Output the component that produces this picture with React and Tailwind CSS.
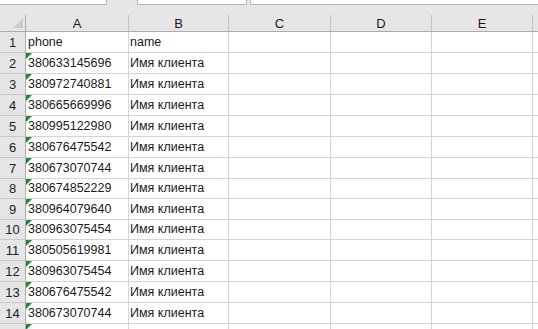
import React from "react";

// sheet columns (width includes the right gridline)
const COLS = [
  { key: "A", w: "w-[103px]" },
  { key: "B", w: "w-[100px]" },
  { key: "C", w: "w-[102px]" },
  { key: "D", w: "w-[101px]" },
  { key: "E", w: "w-[101px]" },
];

const ROWS = [
  { a: "phone", b: "name", h: "h-[21px]", flag: false },
  { a: "380633145696", b: "Имя клиента", h: "h-[21px]", flag: true },
  { a: "380972740881", b: "Имя клиента", h: "h-[21px]", flag: true },
  { a: "380665669996", b: "Имя клиента", h: "h-[21px]", flag: true },
  { a: "380995122980", b: "Имя клиента", h: "h-[21px]", flag: true },
  { a: "380676475542", b: "Имя клиента", h: "h-[21px]", flag: true },
  { a: "380673070744", b: "Имя клиента", h: "h-[21px]", flag: true },
  { a: "380674852229", b: "Имя клиента", h: "h-[20px]", flag: true },
  { a: "380964079640", b: "Имя клиента", h: "h-[21px]", flag: true },
  { a: "380963075454", b: "Имя клиента", h: "h-[20px]", flag: true },
  { a: "380505619981", b: "Имя клиента", h: "h-[21px]", flag: true },
  { a: "380963075454", b: "Имя клиента", h: "h-[21px]", flag: true },
  { a: "380676475542", b: "Имя клиента", h: "h-[21px]", flag: true },
  { a: "380673070744", b: "Имя клиента", h: "h-[21px]", flag: true },
  // only the top sliver of row 15 is on screen
  { a: "", b: "", h: "h-[21px]", flag: true, hidden: true },
];

function Flag() {
  return (
    <svg className="absolute left-0 top-0" width="6" height="6" viewBox="0 0 6 6">
      <polygon points="0,0 6,0 0,6" fill="#1f8a33" />
    </svg>
  );
}

export default function App() {
  return (
    <div
      className="w-[538px] h-[329px] overflow-hidden bg-[#e6e6e6] text-[#1a1a1a]"
      style={{ fontFamily: '"Liberation Sans", Arial, sans-serif' }}
    >
      {/* formula bar remains */}
      <div className="flex h-[15px]">
        <div className="w-[107px] h-[5px] bg-white border-r border-b border-[#b9b9b9]" />
        <div className="ml-[30px] w-[110px] h-[5px] bg-white border-x border-b border-[#b9b9b9]" />
        <div className="ml-[3px] flex-1 h-[5px] bg-white border-l border-b border-[#b9b9b9]" />
      </div>

      {/* column headers */}
      <div className="flex h-[17px] border-b border-[#ababab]">
        <div className="relative w-[26px] shrink-0 border-r border-[#ababab]">
          <svg className="absolute left-[13px] top-[3px]" width="10" height="10" viewBox="0 0 10 10">
            <polygon points="10,0 10,10 0,10" fill="#cbcbcb" />
          </svg>
        </div>
        {COLS.map((c) => (
          <div
            key={c.key}
            className={`${c.w} shrink-0 border-r border-[#c3c3c3] flex items-end justify-center text-[13px] leading-[15px]`}
          >
            {c.key}
          </div>
        ))}
        <div className="flex-1" />
      </div>

      {/* data rows */}
      {ROWS.map((r, i) => (
        <div key={i} className={`flex ${r.h} shrink-0`}>
          <div className="w-[26px] shrink-0 border-r border-b border-r-[#ababab] border-b-[#c8c8c8] flex items-end justify-center pb-[2px] text-[13px] leading-[15px] text-[#222]">
            {r.hidden ? "" : i + 1}
          </div>
          <div className={`${COLS[0].w} relative shrink-0 bg-white border-r border-b border-[#d4d4d4] flex items-end pl-[2px] pb-[2px] text-[12.5px] leading-[15px]`}>
            {r.flag && <Flag />}
            {r.a}
          </div>
          <div className={`${COLS[1].w} shrink-0 bg-white border-r border-b border-[#d4d4d4] flex items-end pl-[1px] pb-[2px] text-[12.5px] leading-[15px]`}>
            {r.b}
          </div>
          <div className={`${COLS[2].w} shrink-0 bg-white border-r border-b border-[#d4d4d4]`} />
          <div className={`${COLS[3].w} shrink-0 bg-white border-r border-b border-[#d4d4d4]`} />
          <div className={`${COLS[4].w} shrink-0 bg-white border-r border-b border-[#d4d4d4]`} />
          <div className="flex-1 bg-white border-b border-[#d4d4d4]" />
        </div>
      ))}
    </div>
  );
}
